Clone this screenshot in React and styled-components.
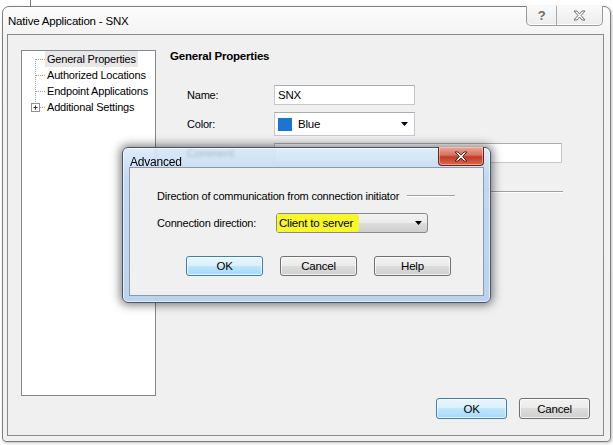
import React from "react";
import styled, { createGlobalStyle } from "styled-components";

const GlobalStyle = createGlobalStyle`
  html, body { margin: 0; padding: 0; background: #fff; }
  body {
    width: 613px; height: 445px; overflow: hidden;
    font-family: "Liberation Sans", Arial, sans-serif;
    font-size: 11px; letter-spacing: -0.2px; color: #000;
  }
  * { box-sizing: border-box; }
`;

const Desktop = styled.div`
  position: relative;
  width: 613px;
  height: 445px;
  overflow: hidden;
  background: #fff;
`;

const BehindEdge = styled.div`
  position: absolute;
  left: 30px;
  top: 0;
  width: 1px;
  height: 7px;
  background: #7a7a7a;
`;

const Window = styled.div`
  position: absolute;
  left: 2px;
  top: 6px;
  width: 609px;
  height: 436px;
  border: 1px solid #7d7d7d;
  border-radius: 7px 7px 4px 4px;
  background: linear-gradient(#fcfcfc, #f3f3f3 30px, #f1f1f1);
  box-shadow: 1px 1px 3px rgba(0, 0, 0, 0.25);
  display: flex;
  flex-direction: column;
  padding: 0 6px 5px 4px;
`;

const TitleBar = styled.div`
  height: 27px;
  display: flex;
  align-items: center;
  flex-shrink: 0;
`;

const TitleText = styled.div`
  padding-left: 1px;
  font-size: 11.5px;
  line-height: 14px;
  margin-top: 1px;
`;

const CaptionGroup = styled.div`
  margin-left: auto;
  margin-right: 1px;
  align-self: flex-start;
  margin-top: -1px;
  display: flex;
  height: 20px;
  border: 1px solid #9a9a9a;
  border-top: none;
  border-radius: 0 0 5px 5px;
  background: linear-gradient(#fafafa, #ececec);
  box-shadow: inset 0 -1px 0 #fff;
`;

const CaptionButton = styled.div`
  width: ${(p) => p.$w}px;
  display: flex;
  align-items: center;
  justify-content: center;
  & + & { border-left: 1px solid #a8a8a8; }
  color: #6a6a6a;
  font-size: 13px;
  font-weight: bold;
  text-shadow: 0 1px 0 #fff;
`;

const Client = styled.div`
  flex: 1;
  display: flex;
  border: 1px solid #8a8a8a;
  background: #f0f0f0;
  padding-left: 13px;
`;

const Tree = styled.div`
  margin-top: 15px;
  width: 135px;
  height: 346px;
  flex-shrink: 0;
  border: 1px solid #828790;
  background: #fff;
`;

const TreeRow = styled.div`
  display: flex;
  align-items: center;
  height: 16px;
`;

const TreeLabel = styled.span`
  line-height: 16px;
  padding: 0 2px;
  background: ${(p) => (p.$selected ? "#e8e8e8" : "transparent")};
`;

const RightPane = styled.div`
  flex: 1;
  display: flex;
  flex-direction: column;
  padding: 14px 13px 16px 14px;
`;

const Heading = styled.h2`
  margin: 0;
  font-size: 11.5px;
  font-weight: bold;
  line-height: 14px;
`;

const Form = styled.div`
  display: grid;
  grid-template-columns: 87px auto;
  grid-template-rows: 20px 24px 20px;
  row-gap: 7px;
  align-items: center;
  margin: 22px 0 0 17px;
`;

const Label = styled.div`
  line-height: 14px;
`;

const TextBox = styled.div`
  width: ${(p) => p.$width}px;
  height: 20px;
  border: 1px solid #c4c8cc;
  border-top-color: #a9adb3;
  background: #fff;
  display: flex;
  align-items: center;
  padding-left: 3px;
  font-size: 11.5px;
`;

const ColorSelect = styled.div`
  width: 141px;
  height: 24px;
  border: 1px solid #c4c8cc;
  border-top-color: #a9adb3;
  background: #fff;
  display: flex;
  align-items: center;
  padding: 0 6px 0 3px;
  font-size: 11.5px;
`;

const Swatch = styled.span`
  width: 14px;
  height: 13px;
  background: ${(p) => p.$color};
  margin-right: 6px;
`;

const Arrow = styled.svg`
  margin-left: auto;
`;

const Separator = styled.div`
  margin-top: 28px;
  width: 393px;
  height: 0;
  border-top: 1px solid #a0a0a0;
  border-bottom: 1px solid #fff;
`;

const Footer = styled.div`
  margin-top: auto;
  display: flex;
  justify-content: flex-end;
  gap: 12px;
`;

const Button = styled.div`
  width: ${(p) => p.$w}px;
  height: ${(p) => p.$h}px;
  display: flex;
  align-items: center;
  justify-content: center;
  border-radius: 3px;
  border: 1px solid ${(p) => (p.$default ? "#3c7fb1" : "#707070")};
  background: ${(p) =>
    p.$default
      ? "linear-gradient(#eaf6fd, #d9f0fc 50%, #bee6fd 50%, #a7d9f5)"
      : "linear-gradient(#f2f2f2, #ebebeb 50%, #dddddd 50%, #cfcfcf)"};
  box-shadow: inset 0 0 0 1px rgba(255, 255, 255, 0.7);
  font-size: 11.5px;
`;

const Dialog = styled.div`
  position: absolute;
  left: 122px;
  top: 147px;
  width: 369px;
  height: 156px;
  border: 1px solid #45566b;
  border-radius: 6px;
  background: linear-gradient(rgba(214, 232, 250, 0.8), rgba(186, 212, 240, 0.86) 30px, rgba(180, 207, 236, 0.9));
  backdrop-filter: blur(1.5px);
  box-shadow: 0 0 10px 2px rgba(0, 0, 0, 0.5), inset 0 0 0 1px rgba(255, 255, 255, 0.6);
  display: flex;
  flex-direction: column;
  padding: 0 6px 6px 6px;
`;

const DialogTitleBar = styled.div`
  height: 19px;
  display: flex;
  flex-shrink: 0;
`;

const DialogTitle = styled.div`
  padding: 8px 0 0 1px;
  font-size: 12px;
  line-height: 13px;
`;

const CloseButton = styled.div`
  margin-left: auto;
  margin-top: -1px;
  width: 46px;
  height: 19px;
  border: 1px solid #6b231a;
  border-top: none;
  border-radius: 0 0 4px 4px;
  background: linear-gradient(#e9a99c, #d7705f 45%, #c23b26 55%, #d8684f);
  box-shadow: inset 0 0 0 1px rgba(255, 220, 210, 0.5);
  display: flex;
  align-items: center;
  justify-content: center;
`;

const DialogClient = styled.div`
  flex: 1;
  border: 1px solid #8a99ab;
  background: #f0f0f0;
  padding: 21px 28px 0 27px;
  display: flex;
  flex-direction: column;
`;

const GroupHeading = styled.div`
  display: flex;
  align-items: center;
  gap: 8px;
  line-height: 14px;
  &::after {
    content: "";
    flex: 1;
    border-top: 1px solid #a0a0a0;
    border-bottom: 1px solid #fff;
  }
`;

const DirRow = styled.div`
  display: flex;
  align-items: center;
  margin-top: 10px;
  height: 20px;
`;

const DirLabel = styled.div`
  width: 119px;
`;

const DirSelect = styled.div`
  width: 152px;
  height: 20px;
  border: 1px solid #8a8a8a;
  border-radius: 3px;
  background: linear-gradient(#f2f2f2, #ebebeb 50%, #dddddd 50%, #cfcfcf);
  display: flex;
  align-items: center;
  padding-right: 5px;
  font-size: 11.5px;
`;

const Highlight = styled.span`
  align-self: stretch;
  display: flex;
  align-items: center;
  padding: 0 6px 0 2px;
  background: #f7f72a;
  border-radius: 1px 3px 3px 1px;
`;

const ButtonRow = styled.div`
  display: flex;
  gap: 17px;
  margin-top: 23px;
  padding-left: 29px;
`;

function Connector({ first, last, expander }) {
  const y1 = first ? 8 : 0;
  const y2 = last ? (expander ? 4 : 8) : 16;
  return (
    <svg width="23" height="16" viewBox="0 0 23 16">
      <line x1="13.5" y1={y1} x2="13.5" y2={y2} stroke="#a0a0a0" strokeDasharray="1 1" />
      <line x1={expander ? 18 : 14} y1="8.5" x2="23" y2="8.5" stroke="#a0a0a0" strokeDasharray="1 1" />
      {expander && (
        <g>
          <rect x="9.5" y="4.5" width="8" height="8" fill="#fff" stroke="#919191" />
          <line x1="11.5" y1="8.5" x2="15.5" y2="8.5" stroke="#333" />
          <line x1="13.5" y1="6.5" x2="13.5" y2="10.5" stroke="#333" />
        </g>
      )}
    </svg>
  );
}

function XGlyph({ fill, stroke, w = 12, h = 10 }) {
  return (
    <svg width={w + 2} height={h + 2} viewBox={`-1 -1 ${w + 2} ${h + 2}`}>
      <polygon
        points={`0,0 3,0 ${w / 2},3 ${w - 3},0 ${w},0 ${w / 2 + 1.6},${h / 2} ${w},${h} ${w - 3},${h} ${w / 2},${h - 3} 3,${h} 0,${h} ${w / 2 - 1.6},${h / 2}`}
        fill={fill}
        stroke={stroke}
        strokeWidth="1"
        strokeLinejoin="round"
      />
    </svg>
  );
}

function DownArrow() {
  return (
    <Arrow width="7" height="4" viewBox="0 0 7 4">
      <polygon points="0,0 7,0 3.5,4" fill="#000" />
    </Arrow>
  );
}

const treeItems = [
  { label: "General Properties", selected: true },
  { label: "Authorized Locations" },
  { label: "Endpoint Applications" },
  { label: "Additional Settings", expander: true },
];

export default function App() {
  return (
    <>
      <GlobalStyle />
      <Desktop>
        <BehindEdge />
        <Window>
          <TitleBar>
            <TitleText>Native Application - SNX</TitleText>
            <CaptionGroup>
              <CaptionButton $w={29}>?</CaptionButton>
              <CaptionButton $w={46}>
                <XGlyph fill="#fff" stroke="#6d6d6d" w={11} h={9} />
              </CaptionButton>
            </CaptionGroup>
          </TitleBar>
          <Client>
            <Tree>
              {treeItems.map((item, i) => (
                <TreeRow key={item.label}>
                  <Connector first={i === 0} last={i === treeItems.length - 1} expander={item.expander} />
                  <TreeLabel $selected={item.selected}>{item.label}</TreeLabel>
                </TreeRow>
              ))}
            </Tree>
            <RightPane>
              <Heading>General Properties</Heading>
              <Form>
                <Label>Name:</Label>
                <TextBox $width={141}>SNX</TextBox>
                <Label>Color:</Label>
                <ColorSelect>
                  <Swatch $color="#1c74d4" />
                  Blue
                  <DownArrow />
                </ColorSelect>
                <Label>Comment:</Label>
                <TextBox $width={288} />
              </Form>
              <Separator />
              <Footer>
                <Button $w={71} $h={21} $default>OK</Button>
                <Button $w={71} $h={21}>Cancel</Button>
              </Footer>
            </RightPane>
          </Client>
        </Window>

        <Dialog>
          <DialogTitleBar>
            <DialogTitle>Advanced</DialogTitle>
            <CloseButton>
              <XGlyph fill="#fff" stroke="#5a1d15" w={12} h={9} />
            </CloseButton>
          </DialogTitleBar>
          <DialogClient>
            <GroupHeading>Direction of communication from connection initiator</GroupHeading>
            <DirRow>
              <DirLabel>Connection direction:</DirLabel>
              <DirSelect>
                <Highlight>Client to server</Highlight>
                <DownArrow />
              </DirSelect>
            </DirRow>
            <ButtonRow>
              <Button $w={77} $h={20} $default>OK</Button>
              <Button $w={77} $h={20}>Cancel</Button>
              <Button $w={77} $h={20}>Help</Button>
            </ButtonRow>
          </DialogClient>
        </Dialog>
      </Desktop>
    </>
  );
}
